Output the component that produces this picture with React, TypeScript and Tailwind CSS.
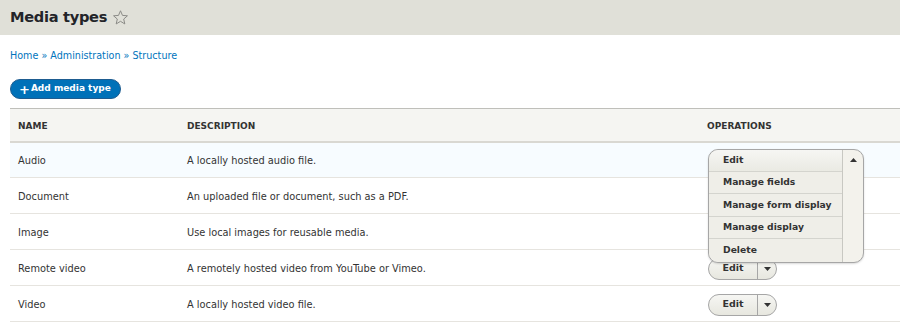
import React from "react";

const rows = [
  { name: "Audio", desc: "A locally hosted audio file.", open: true },
  { name: "Document", desc: "An uploaded file or document, such as a PDF." },
  { name: "Image", desc: "Use local images for reusable media." },
  { name: "Remote video", desc: "A remotely hosted video from YouTube or Vimeo.", btn: true },
  { name: "Video", desc: "A locally hosted video file.", btn: true },
];

const menu = ["Manage fields", "Manage form display", "Manage display", "Delete"];

function Caret({ up }: { up?: boolean }) {
  return (
    <svg width="7" height="4" viewBox="0 0 7 4" className="fill-[#333]">
      {up ? <path d="M0 4 L3.5 0 L7 4 Z" /> : <path d="M0 0 L3.5 4 L7 0 Z" />}
    </svg>
  );
}

function DropButton() {
  return (
    <div className="mt-[2px] flex h-[22px] w-[69px] items-stretch rounded-full border border-[#a6a6a6] bg-gradient-to-b from-[#f6f6f3] to-[#e7e7df] text-[9.5px] font-bold text-[#333]">
      <span className="flex w-[49px] items-center justify-center border-r border-[#a6a6a6]">Edit</span>
      <span className="flex flex-1 items-center justify-center">
        <Caret />
      </span>
    </div>
  );
}

function OpenDropButton() {
  return (
    <div className="absolute left-[9px] top-[6px] z-10 flex w-[156px] rounded-[10px] border border-[#a6a6a6] bg-[#f3f2ec] text-[9.2px] font-bold text-[#333] shadow-[0_1px_2px_rgba(0,0,0,0.15)]">
      <ul className="flex flex-1 flex-col border-r border-[#c8c8c2]">
        <li className="flex h-[22px] items-center rounded-tl-[10px] border-b border-[#d4d4ce] bg-gradient-to-b from-[#f6f6f3] to-[#eaeae3] pl-[14px]">
          Edit
        </li>
        {menu.map((m, i) => (
          <li
            key={m}
            className={
              "flex h-[22.5px] items-center whitespace-nowrap bg-[#efeee8] pl-[14px] " +
              (i < menu.length - 1 ? "border-b border-[#d4d4ce]" : "rounded-bl-[10px]")
            }
          >
            {m}
          </li>
        ))}
      </ul>
      <div className="flex w-[20px] justify-center pt-[8px]">
        <div className="h-[4px]">
          <Caret up />
        </div>
      </div>
    </div>
  );
}

export default function App() {
  return (
    <div className="min-h-[330px] bg-white font-['DejaVu_Sans',sans-serif] text-[#333]">
      <div className="flex h-[35px] items-center gap-[5px] bg-[#e0e0d8] pl-[10px]">
        <h1 className="text-[14.6px] font-bold leading-none tracking-[-0.3px] text-[#232429]">Media types</h1>
        <svg width="17" height="17" viewBox="0 0 24 24" className="fill-none stroke-[#8a8a86]" strokeWidth="1.4">
          <path d="M12 2.5 L14.8 9 L21.8 9.6 L16.5 14.2 L18.1 21.1 L12 17.4 L5.9 21.1 L7.5 14.2 L2.2 9.6 L9.2 9 Z" />
        </svg>
      </div>

      <div className="pl-[10px]">
        <nav className="mt-[14px] text-[9.6px] leading-[14px] text-[#0074bd]">
          Home » Administration » Structure
        </nav>

        <button className="mt-[16px] flex h-[20px] items-center rounded-full border border-[#1e5c90] bg-[#0071b8] pl-[8px] pr-[9px] text-[9px] font-bold text-white">
          <span className="mr-[1px] text-[13px] leading-none">+</span>Add media type
        </button>

        <table className="mt-[9px] w-full border-collapse text-left text-[9.8px]">
          <thead>
            <tr className="h-[33px] border-t border-b-2 border-t-[#bfbfba] border-b-[#d9d8d2] bg-[#f5f5f2] text-[9px] font-bold uppercase text-[#333]">
              <th className="w-[169px] pl-[8px] pt-[3px]">Name</th>
              <th className="w-[520px] pl-[8px] pt-[3px]">Description</th>
              <th className="pl-[8px] pt-[3px]">Operations</th>
            </tr>
          </thead>
          <tbody>
            {rows.map((r) => (
              <tr
                key={r.name}
                className={"h-[36px] border-b border-[#e6e4df] " + (r.open ? "bg-[#f7fcff]" : "bg-white")}
              >
                <td className="pl-[8px] pt-[3px]">{r.name}</td>
                <td className="pl-[8px] pt-[3px]">{r.desc}</td>
                <td className="relative pl-[9px]">
                  {r.open && <OpenDropButton />}
                  {r.btn && <DropButton />}
                </td>
              </tr>
            ))}
          </tbody>
        </table>
      </div>
    </div>
  );
}
